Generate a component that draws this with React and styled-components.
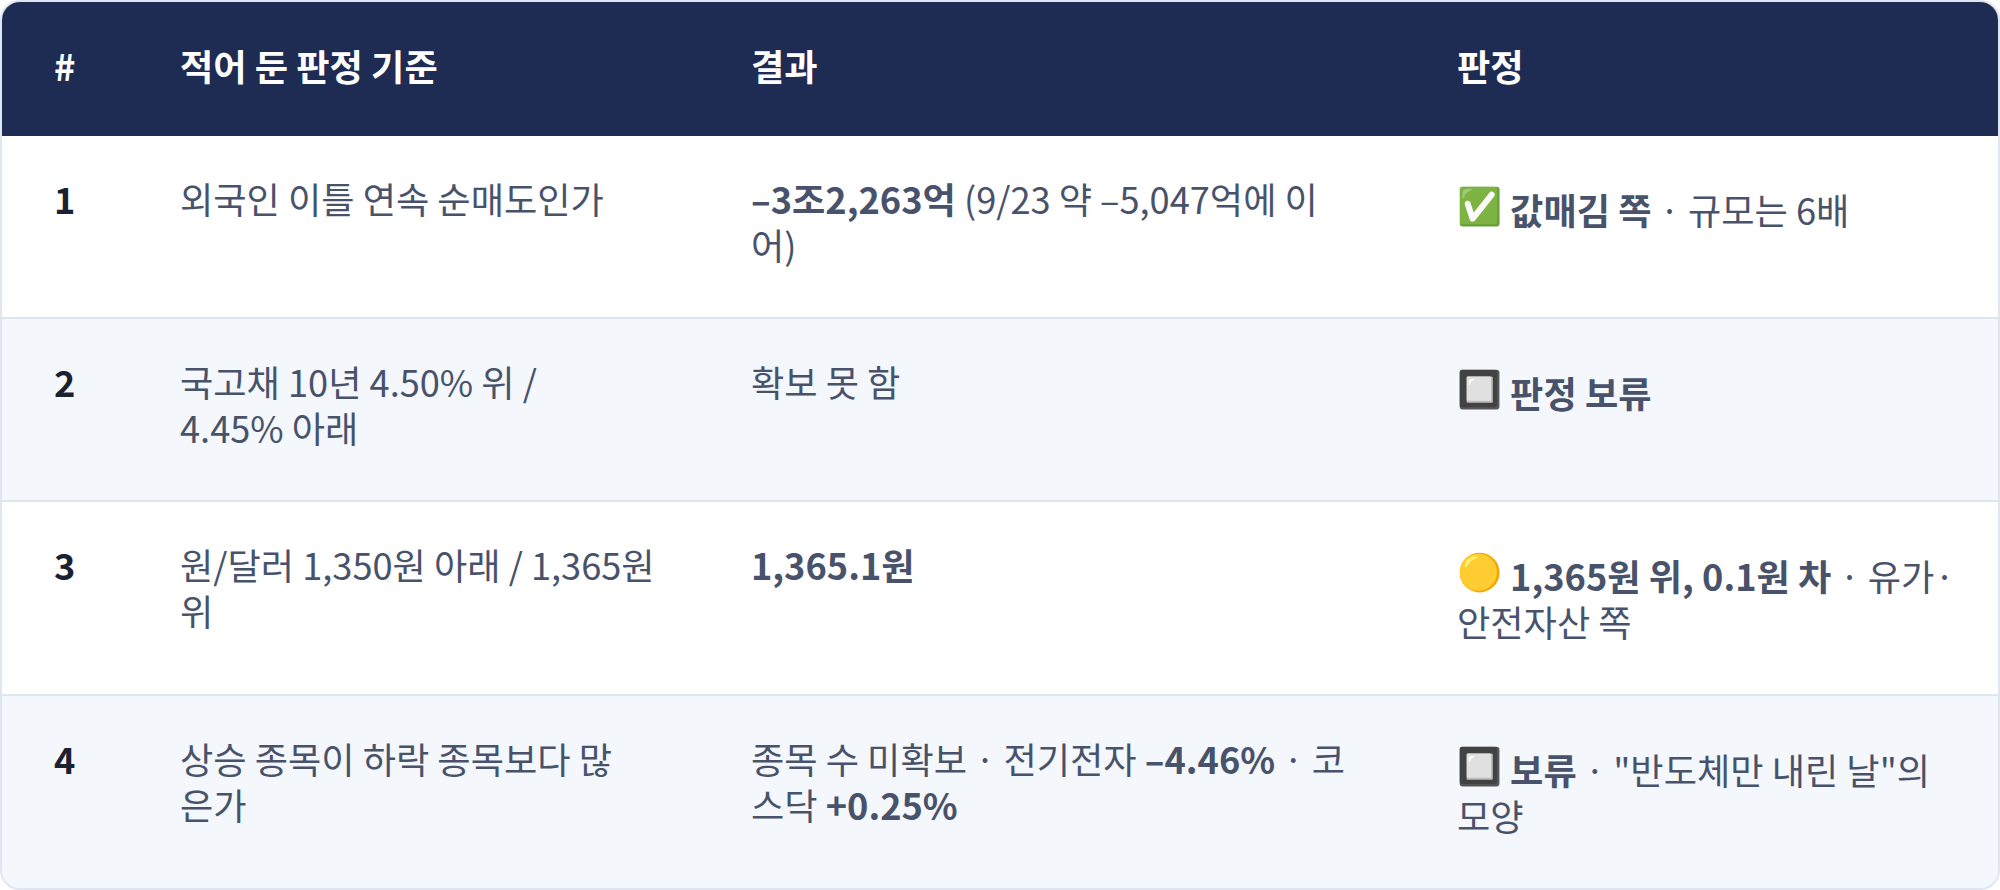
import React from "react";
import styled, { createGlobalStyle } from "styled-components";

const Global = createGlobalStyle`
  html, body { margin: 0; padding: 0; background: #ffffff; }
  body {
    font-family: "Noto Sans CJK KR", "Noto Sans", sans-serif;
    -webkit-font-smoothing: antialiased;
  }
`;

const Table = styled.div`
  box-sizing: border-box;
  width: 2000px;
  border: 2px solid #dfe5f1;
  border-radius: 20px;
  overflow: hidden;
  font-size: 36.2px;
  line-height: 46px;
`;

const Row = styled.div`
  display: grid;
  grid-template-columns: 126px 571px 706px 1fr;
  background: ${(p) => (p.$head ? "#1e2b52" : p.$alt ? "#f4f7fc" : "#ffffff")};
  border-bottom: ${(p) => (p.$last || p.$head ? "none" : "2px solid #dfe5f1")};
`;

const Cell = styled.div`
  padding: ${(p) => (p.$head ? "40px 30px 48px 52px" : "39px 30px 50px 52px")};
  white-space: nowrap;
  color: ${(p) => (p.$head ? "#ffffff" : p.$num ? "#1a2131" : "#48536b")};
  font-weight: ${(p) => (p.$head || p.$num ? 700 : 400)};
`;

const Strong = styled.b`
  font-weight: 700;
`;

const Emoji = styled.span`
  display: inline-block;
  line-height: 57px;
  vertical-align: 6px;
`;

const rows = [
  {
    n: "1",
    crit: <>외국인 이틀 연속 순매도인가</>,
    res: (
      <>
        <Strong>–3조2,263억</Strong> (9/23 약 –5,047억에 이
        <br />
        어)
      </>
    ),
    verdict: (
      <>
        <Emoji>✅</Emoji> <Strong>값매김 쪽</Strong> · 규모는 6배
      </>
    ),
  },
  {
    n: "2",
    crit: (
      <>
        국고채 10년 4.50% 위 /
        <br />
        4.45% 아래
      </>
    ),
    res: <>확보 못 함</>,
    verdict: (
      <>
        <Emoji>🔲</Emoji> <Strong>판정 보류</Strong>
      </>
    ),
  },
  {
    n: "3",
    crit: (
      <>
        원/달러 1,350원 아래 / 1,365원
        <br />위
      </>
    ),
    res: <Strong>1,365.1원</Strong>,
    verdict: (
      <>
        <Emoji>🟡</Emoji> <Strong>1,365원 위, 0.1원 차</Strong> · 유가·
        <br />
        안전자산 쪽
      </>
    ),
  },
  {
    n: "4",
    crit: (
      <>
        상승 종목이 하락 종목보다 많
        <br />
        은가
      </>
    ),
    res: (
      <>
        종목 수 미확보 · 전기전자 <Strong>–4.46%</Strong> · 코
        <br />
        스닥 <Strong>+0.25%</Strong>
      </>
    ),
    verdict: (
      <>
        <Emoji>🔲</Emoji> <Strong>보류</Strong> · "반도체만 내린 날"의
        <br />
        모양
      </>
    ),
  },
];

export default function App() {
  return (
    <>
      <Global />
      <Table>
        <Row $head>
          <Cell $head>#</Cell>
          <Cell $head>적어 둔 판정 기준</Cell>
          <Cell $head>결과</Cell>
          <Cell $head>판정</Cell>
        </Row>
        {rows.map((r, i) => (
          <Row key={r.n} $alt={i % 2 === 1} $last={i === rows.length - 1}>
            <Cell $num>{r.n}</Cell>
            <Cell>{r.crit}</Cell>
            <Cell>{r.res}</Cell>
            <Cell>{r.verdict}</Cell>
          </Row>
        ))}
      </Table>
    </>
  );
}
